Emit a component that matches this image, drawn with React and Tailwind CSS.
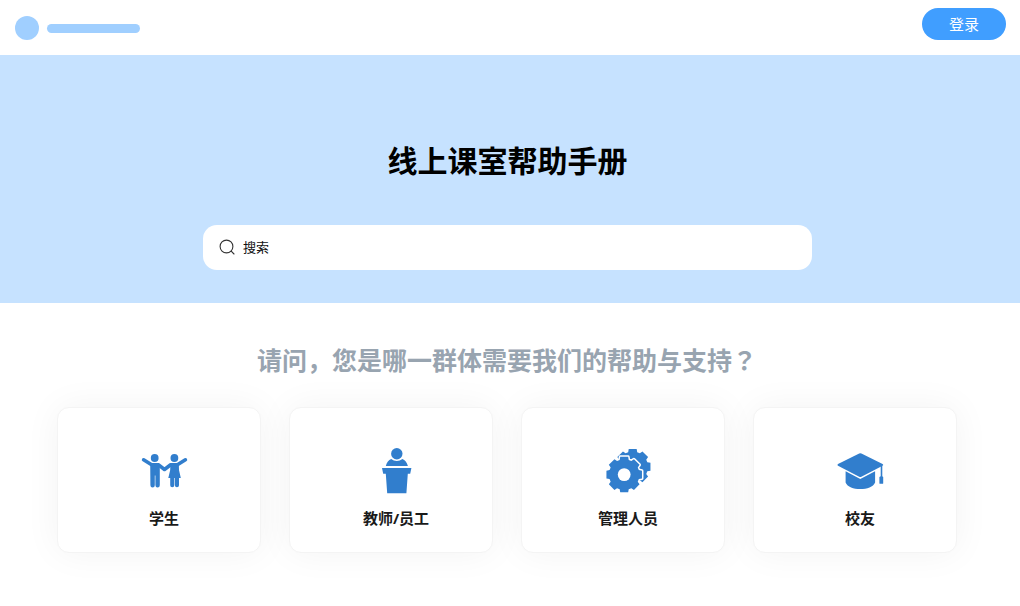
const StudentIcon = () => (
  <svg viewBox="0 0 48 48" className="size-12" fill="none" stroke="#317ecd" strokeLinecap="round" strokeLinejoin="round" aria-hidden="true">
    <circle cx="14.7" cy="11" r="3.9" fill="#317ecd" stroke="none" />
    <circle cx="34.4" cy="11" r="3.9" fill="#317ecd" stroke="none" />
    <path d="M3.6 12.8 11.6 17.8M18.6 17.8 24.5 22.5 30.6 17.8M37.4 17.8 45.4 12.8" strokeWidth="3.6" />
    <path d="M10.2 16h8.6l1 1.4v20.8a2 2 0 0 1-4.400 0V28.400h-.6V38.200a2 2 0 0 1-4.400 0Z" fill="#317ecd" stroke="none" />
    <path d="M30.400 16h8.400l.2 7 1.800 8h-1.800v7.200a2 2 0 0 1-4.100 0V31h-.6v7.200a2 2 0 0 1-4.100 0V31h-1.900l1.900-8Z" fill="#317ecd" stroke="none" />
  </svg>
);

const TeacherIcon = () => (
  <svg viewBox="0 0 48 48" className="size-12" fill="#317ecd" aria-hidden="true">
    <circle cx="24.8" cy="6.700" r="5.700" />
    <path d="M13.800 19c1-3.500 2.800-6 5.400-7 3.200 2.600 8 2.600 11.200 0 2.600 1 4.500 3.500 5.500 7Z" />
    <path d="M10 21h29.400l-1.200 5.800h-2.400L34.400 46.300H15.200l-1.400-19.500h-2.600Z" />
  </svg>
);

const gearPath = (cx, cy) => {
  const points = [];
  for (let i = 0; i < 8; i++) {
    [[-0.3, 15.3], [-0.22, 18.2], [0.22, 18.2], [0.3, 15.3]].forEach(([offset, r]) => {
      const angle = (i * Math.PI) / 4 + offset;
      points.push(`${(cx + r * Math.cos(angle)).toFixed(2)} ${(cy + r * Math.sin(angle)).toFixed(2)}`);
    });
  }
  return `M${points.join("L")}Z`;
};

const AdminIcon = () => (
  <svg viewBox="0 0 48 48" className="size-12" fill="#317ecd" strokeLinejoin="round" aria-hidden="true">
    <path d={gearPath(28.7, 19.8)} />
    <path d={gearPath(20.2, 27.6)} stroke="#fff" strokeWidth="3" />
    <path d={gearPath(20.2, 27.6)} />
    <circle cx="20.2" cy="27.6" r="6.4" fill="#fff" />
  </svg>
);

const AlumniIcon = () => (
  <svg viewBox="0 0 48 48" className="size-12" fill="#317ecd" aria-hidden="true">
    <path d="M23.2 6.5q1.1-.5 2.2 0l21.2 10.4q1.3.9 0 1.8L25.4 29.8q-1.1.5-2.2 0L2 18.7q-1.3-.9 0-1.8Z" />
    <path d="M9.6 24.3 24.3 32l14.8-7.7v11.2c-1.8 4.4-8 6.6-14.8 6.6S11.4 39.9 9.6 35.5Z" />
    <path d="M44.7 19h1.6v10.2l.9.8v6.2q0 .6-.6.6h-2.6q-.6 0-.6-.6V30l1.3-.8Z" />
  </svg>
);

const groups = [
  { label: "学生", Icon: StudentIcon },
  { label: "教师/员工", Icon: TeacherIcon },
  { label: "管理人员", Icon: AdminIcon },
  { label: "校友", Icon: AlumniIcon },
];

const App = () => {
  return (
    <div className="min-h-screen bg-white font-['Noto_Sans','Noto_Sans_CJK_JP','Noto_Sans_CJK_SC',sans-serif] text-black">
      <header className="flex h-[55px] items-start justify-between pl-[15px] pr-[14px]">
        <div className="mt-4 flex items-center gap-2">
          <span className="size-6 rounded-full bg-[#a0cfff]" />
          <span className="h-[9px] w-[93px] rounded-full bg-[#a0cfff]" />
        </div>
        <button type="button" className="mt-2 h-8 w-[84px] rounded-full bg-[#409eff] text-[15px] leading-5 text-white">
          登录
        </button>
      </header>

      <main>
        <section className="flex flex-col items-center bg-[#c6e2ff] pb-[33px] pl-4 pr-[21px] pt-[86px]">
          <h1 className="text-[30px] font-bold leading-10">线上课室帮助手册</h1>
          <label className="mt-11 flex h-[45px] w-full max-w-[609px] items-center gap-2 rounded-[14px] bg-white px-4 pb-0.5">
            <svg viewBox="0 0 16 16" className="size-4 shrink-0" fill="none" stroke="#333" strokeWidth="1.1" strokeLinecap="round" aria-hidden="true">
              <circle cx="7.5" cy="7.5" r="6.4" />
              <path d="m12.2 12.2 2.8 2.8" />
            </svg>
            <input
              type="text"
              aria-label="搜索"
              placeholder="搜索"
              className="min-w-0 flex-1 bg-transparent text-[13px] leading-5 outline-none placeholder:text-[#111]"
            />
          </label>
        </section>

        <section className="pb-12 pl-[57px] pr-[63px] pt-[37px]">
          <h2 className="text-center text-[25px] font-bold leading-10 text-[#98a4b0]">
            请问，您是哪一群体需要我们的帮助与支持？
          </h2>
          <div className="mt-[27px] grid grid-cols-4 gap-7">
            {groups.map(({ label, Icon }) => (
              <a
                key={label}
                href="#"
                className="flex h-[146px] flex-col items-center rounded-xl border border-[#f4f4f4] bg-white pl-[10px] pt-[39px] shadow-[0_0_36px_rgba(0,0,0,0.05)]"
              >
                <Icon />
                <span className="mt-[11px] text-[15px] font-bold leading-6 text-[#1a1a1a]">{label}</span>
              </a>
            ))}
          </div>
        </section>
      </main>
    </div>
  );
};

export default App;
